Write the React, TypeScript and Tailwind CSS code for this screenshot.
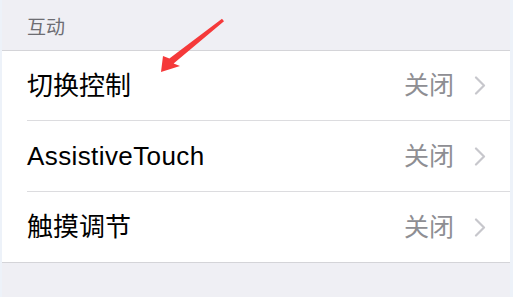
import React from "react";

const rows = [
  { label: "切换控制", h: "h-[70px]", latin: false },
  { label: "AssistiveTouch", h: "h-[71px]", latin: true },
  { label: "触摸调节", h: "h-[70px]", latin: false },
];

function Chevron() {
  return (
    <svg width="12" height="19" viewBox="0 0 12 19" className="shrink-0">
      <path d="M2 1.5 L10 9.5 L2 17.5" fill="none" stroke="#c7c7cc" strokeWidth="2.2" strokeLinecap="round" strokeLinejoin="round" />
    </svg>
  );
}

export default function App() {
  return (
    <div
      className="relative flex w-[513px] h-[297px] overflow-hidden bg-[#edf2f9]"
      style={{ fontFamily: '"Liberation Sans", "Noto Sans CJK SC", sans-serif' }}
    >
      <div className="w-[2px] shrink-0" />
      <div className="flex-1 flex flex-col bg-[#efeff4]">
        <div className="h-[50px] flex items-end pb-[13px] pl-[25px] text-[19px] leading-none text-[#6d6d72]">
          互动
        </div>
        <div className="bg-white border-y border-[#d4d4d8]">
          {rows.map((r, i) => (
            <div key={r.label} className="pl-[25px]">
              <div
                className={`${r.h} flex items-center pr-[24px] ${i < rows.length - 1 ? "border-b border-[#dcdcdf]" : ""}`}
              >
                <span className={`flex-1 text-[26px] text-black leading-none ${r.latin ? "tracking-[0.4px]" : ""}`}>{r.label}</span>
                <span className="text-[25px] text-[#8e8e93] leading-none mr-[20px]">关闭</span>
                <Chevron />
              </div>
            </div>
          ))}
        </div>
      </div>
      <div className="w-[3px] shrink-0" />
      <svg className="absolute left-0 top-0 pointer-events-none" width="513" height="297">
        <polygon
          points="161,72 163,56 169.4,58.5 222,18.8 224,21.2 173.6,63.5 180,66"
          fill="#f5393a"
        />
      </svg>
    </div>
  );
}
